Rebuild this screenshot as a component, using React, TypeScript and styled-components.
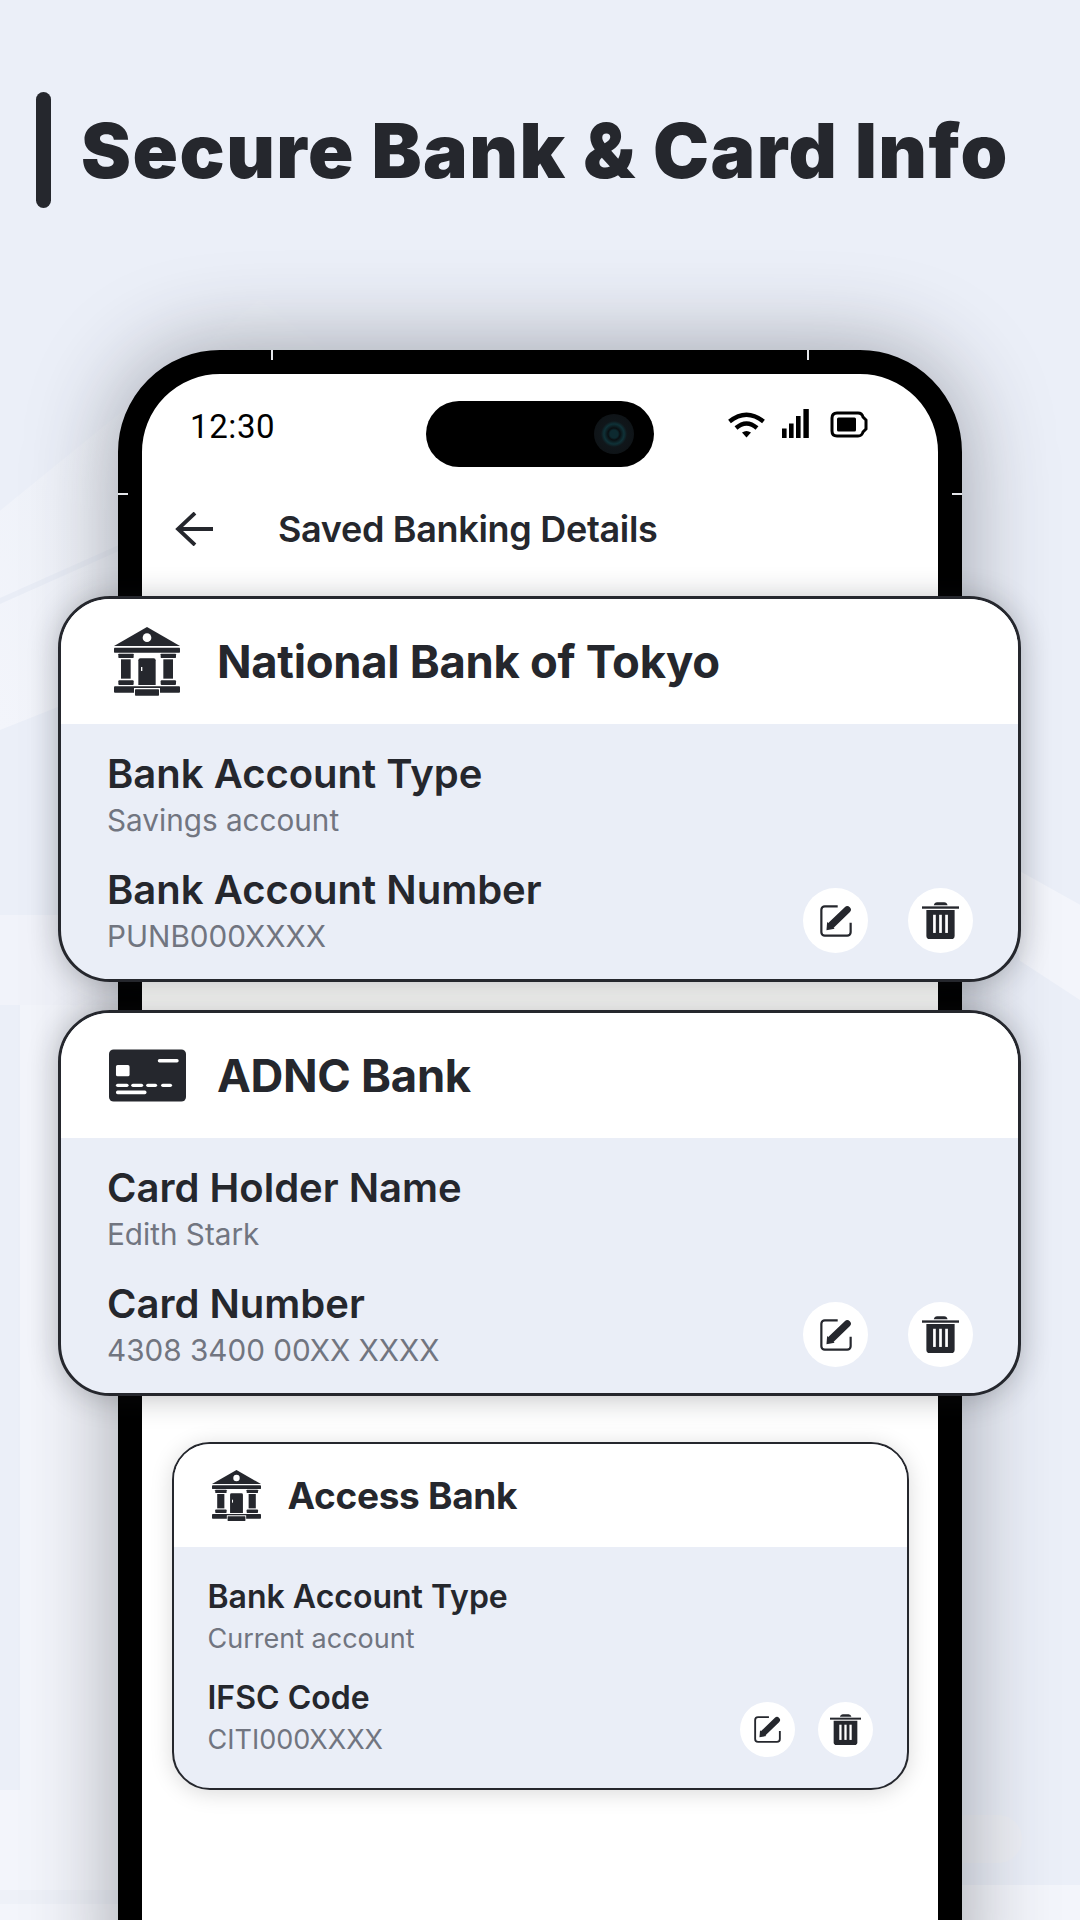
import React from 'react'
import styled, { createGlobalStyle, css } from 'styled-components'

const INK = '#25272d'
const MUTED = '#717580'
const PANEL = '#eaeef7'

const GlobalStyle = createGlobalStyle`
    html, body {
        margin: 0;
        padding: 0;
        background: #ebeff8;
    }
    * {
        box-sizing: border-box;
    }
`

const BankIcon = ({ size }: { size: number }) => (
    <svg width={size} viewBox="0 0 198 206" fill={INK}>
        <path d="M99 0 L198 57 H0 Z" />
        <circle cx="99" cy="32" r="13" fill="#fff" />
        <rect x="0" y="62" width="198" height="15" rx="2" />
        <rect x="13" y="80" width="46" height="13" rx="2" />
        <rect x="21" y="97" width="29" height="58" />
        <rect x="13" y="160" width="46" height="14" rx="3" />
        <rect x="140" y="80" width="46" height="13" rx="2" />
        <rect x="148" y="97" width="29" height="58" />
        <rect x="140" y="160" width="46" height="14" rx="3" />
        <path d="M73 100 a6 6 0 0 1 6 -6 H119 a6 6 0 0 1 6 6 V174 H73 Z" />
        <rect x="81" y="120" width="4" height="12" fill="#fff" />
        <rect x="0" y="178" width="198" height="19" rx="3" />
        <rect x="60" y="183" width="78" height="23" fill="#fff" />
        <rect x="63" y="187" width="72" height="19" rx="2" />
    </svg>
)

const CardIcon = () => (
    <svg width="77" height="53" viewBox="0 0 232 157">
        <rect width="232" height="157" rx="14" fill={INK} />
        <g fill="#fff">
            <rect x="21" y="47" width="41" height="34" rx="5" />
            <rect x="147" y="29" width="63" height="10" rx="5" />
            <rect x="21" y="103" width="38" height="10" rx="5" />
            <rect x="67" y="103" width="36" height="10" rx="5" />
            <rect x="112" y="103" width="33" height="10" rx="5" />
            <rect x="157" y="103" width="33" height="10" rx="5" />
            <rect x="21" y="124" width="92" height="11" rx="5" />
        </g>
    </svg>
)

const EditIcon = ({ size }: { size: number }) => (
    <svg width={size} height={size} viewBox="0 0 94 94">
        <path
            d="M52 4 H14 a10 10 0 0 0 -10 10 V80 a10 10 0 0 0 10 10 H80 a10 10 0 0 0 10 -10 V52"
            fill="none"
            stroke={INK}
            strokeWidth="6.5"
        />
        <path d="M33 59 L80 14" stroke={INK} strokeWidth="21" strokeLinecap="round" />
        <path d="M19 74 L21 50 L43 70 Z" fill={INK} />
    </svg>
)

const TrashIcon = ({ size }: { size: number }) => (
    <svg width={size} height={size} viewBox="0 0 110 110" fill={INK}>
        <path d="M35 10 Q37 1 45 1 H66 Q74 1 76 10 Z" />
        <rect x="0" y="13" width="110" height="7" />
        <path d="M13 24 H97 V100 a10 10 0 0 1 -10 10 H23 a10 10 0 0 1 -10 -10 Z" />
        <g fill="#fff">
            <rect x="33" y="38" width="8" height="54" />
            <rect x="51" y="38" width="8" height="54" />
            <rect x="69" y="38" width="8" height="54" />
        </g>
    </svg>
)

const Wifi = () => (
    <svg width="37" height="26" viewBox="0 0 37 26" fill="none" stroke="#000" strokeWidth="4.4">
        <path d="M1.5 9.5 Q18.5 -4 35.5 9.5" />
        <path d="M8 16 Q18.5 7 29 16" />
        <path d="M14 20.5 Q18.5 17.5 23 20.5 L18.5 25.5 Z" fill="#000" stroke="none" />
    </svg>
)

const Signal = () => (
    <svg width="27" height="29" viewBox="0 0 27 29" fill="#000">
        <rect x="0" y="19.5" width="4.6" height="9.5" />
        <rect x="7" y="14.5" width="4.6" height="14.5" />
        <rect x="14" y="7" width="4.6" height="22" />
        <rect x="21.4" y="0" width="5.4" height="29" />
    </svg>
)

const Battery = () => (
    <svg width="38" height="27" viewBox="0 0 38 27">
        <path
            d="M7 2 H28 Q32 2 33 6 L36 9 V18 L33 21 Q32 25 28 25 H7 Q2 25 2 20 V7 Q2 2 7 2 Z"
            fill="none"
            stroke="#000"
            strokeWidth="3"
        />
        <rect x="7" y="6.5" width="19" height="14" rx="1.5" fill="#000" />
    </svg>
)

const BackArrow = () => (
    <svg width="38" height="34" viewBox="0 0 38 34" fill="none" stroke={INK} strokeWidth="3.8">
        <path d="M38 17 H3" />
        <path d="M20 1 L3 17 L20 33" />
    </svg>
)

type FieldData = { label: string; value: string }

const BankCard = ({
    compact,
    icon,
    name,
    fields,
}: {
    compact?: boolean
    icon: React.ReactNode
    name: string
    fields: FieldData[]
}) => (
    <Card $compact={compact}>
        <CardHeader $compact={compact}>
            <IconSlot $compact={compact}>{icon}</IconSlot>
            <CardName $compact={compact}>{name}</CardName>
        </CardHeader>
        <CardBody $compact={compact}>
            <Fields $compact={compact}>
                {fields.map((f) => (
                    <div key={f.label}>
                        <FieldLabel $compact={compact}>{f.label}</FieldLabel>
                        <FieldValue $compact={compact}>{f.value}</FieldValue>
                    </div>
                ))}
            </Fields>
            <Actions $compact={compact}>
                <RoundButton $compact={compact}>
                    <EditIcon size={compact ? 27 : 32} />
                </RoundButton>
                <RoundButton $compact={compact}>
                    <TrashIcon size={compact ? 31 : 37} />
                </RoundButton>
            </Actions>
        </CardBody>
    </Card>
)

const App = () => (
    <Page>
        <GlobalStyle />
        <RoofLeft />
        <RoofLeftEdge />
        <RoofRight />
        <PlinthLeft />
        <ColumnLeft />
        <FootLeft />
        <FootLine />
        <FootRight />
        <PillRight />

        <TitleRow>
            <TitleBar />
            <Title>Secure Bank &amp; Card Info</Title>
        </TitleRow>

        <Phone>
            <NotchTop $side="left" />
            <NotchTop $side="right" />
            <NotchSide $side="left" />
            <NotchSide $side="right" />

            <StatusBar>
                <Clock>12:30</Clock>
                <Island>
                    <Camera />
                </Island>
                <StatusIcons>
                    <Wifi />
                    <Signal />
                    <BatterySlot>
                        <Battery />
                    </BatterySlot>
                </StatusIcons>
            </StatusBar>

            <NavBar>
                <BackArrow />
                <NavTitle>Saved Banking Details</NavTitle>
            </NavBar>

            <CardStack>
                <BankCard
                    icon={<BankIcon size={66} />}
                    name="National Bank of Tokyo"
                    fields={[
                        { label: 'Bank Account Type', value: 'Savings account' },
                        { label: 'Bank Account Number', value: 'PUNB000XXXX' },
                    ]}
                />
                <BankCard
                    icon={<CardIcon />}
                    name="ADNC Bank"
                    fields={[
                        { label: 'Card Holder Name', value: 'Edith Stark' },
                        { label: 'Card Number', value: '4308 3400 00XX XXXX' },
                    ]}
                />
            </CardStack>

            <LowerList>
                <BankCard
                    compact
                    icon={<BankIcon size={49} />}
                    name="Access Bank"
                    fields={[
                        { label: 'Bank Account Type', value: 'Current account' },
                        { label: 'IFSC Code', value: 'CITI000XXXX' },
                    ]}
                />
            </LowerList>
        </Phone>
    </Page>
)

export default App

const Page = styled.div`
    position: relative;
    width: 1080px;
    height: 1920px;
    overflow: hidden;
    background: #ebeff8;
    font-family: Inter, 'Liberation Sans', sans-serif;
    color: ${INK};
`

const Decor = styled.div`
    position: absolute;
    background: #f3f5fb;
`

const RoofLeft = styled(Decor)`
    left: 0;
    top: 300px;
    width: 540px;
    height: 430px;
    clip-path: polygon(48% 0, 100% 50%, 0 100%, 0 49%);
    background: linear-gradient(60deg, #f3f5fb 0%, #eff2f9 25%, #ecf0f8 50%);
`

const RoofLeftEdge = styled(Decor)`
    left: 0;
    top: 520px;
    width: 130px;
    height: 100px;
    clip-path: polygon(0 78%, 100% 20%, 100% 26%, 0 84%);
    background: #e9edf6;
`

const RoofRight = styled(Decor)`
    left: 1000px;
    top: 860px;
    width: 80px;
    height: 140px;
    clip-path: polygon(0 0, 100% 32%, 100% 100%, 25% 72%);
`

const PlinthLeft = styled(Decor)`
    left: 0;
    top: 915px;
    width: 130px;
    height: 90px;
    background: #f1f3fa;
`

const ColumnLeft = styled(Decor)`
    left: 20px;
    top: 1005px;
    width: 100px;
    height: 790px;
`

const FootLeft = styled(Decor)`
    left: 0;
    top: 1790px;
    width: 130px;
    height: 130px;
`

const FootLine = styled(Decor)`
    left: 0;
    top: 1890px;
    width: 130px;
    height: 14px;
    background: #eef1f8;
`

const FootRight = styled(Decor)`
    left: 960px;
    top: 1885px;
    width: 120px;
    height: 35px;
`

const PillRight = styled(Decor)`
    left: 940px;
    top: 1815px;
    width: 82px;
    height: 48px;
    border-radius: 24px;
    background: #eef0f6;
`

const TitleRow = styled.div`
    position: relative;
    display: flex;
    align-items: center;
    gap: 30px;
    padding: 92px 0 0 36px;
`

const TitleBar = styled.div`
    width: 15px;
    height: 116px;
    border-radius: 8px;
    background: ${INK};
`

const Title = styled.h1`
    margin: 0 0 -2px;
    font-family: Inter, 'Liberation Sans', sans-serif;
    font-size: 75px;
    font-weight: 900;
    letter-spacing: 1.5px;
    line-height: 80px;
    white-space: nowrap;
    color: ${INK};
`

const Phone = styled.div`
    position: relative;
    width: 844px;
    height: 1660px;
    margin: 142px 0 0 118px;
    border: 24px solid #000;
    border-radius: 102px 102px 0 0;
    background: #fff;
    box-shadow: 0 0 90px rgba(40, 42, 50, 0.4);
`

const NotchTop = styled.i<{ $side: 'left' | 'right' }>`
    position: absolute;
    top: -24px;
    ${({ $side }) => ($side === 'left' ? 'left: 129px;' : 'right: 129px;')}
    width: 2px;
    height: 10px;
    background: #e4e6ea;
`

const NotchSide = styled.i<{ $side: 'left' | 'right' }>`
    position: absolute;
    top: 119px;
    ${({ $side }) => ($side === 'left' ? 'left: -24px;' : 'right: -24px;')}
    width: 10px;
    height: 2px;
    background: #e4e6ea;
`

const StatusBar = styled.div`
    display: grid;
    grid-template-columns: 236px 228px 1fr;
    padding: 27px 70px 0 48px;
    height: 93px;
`

const Clock = styled.div`
    font-family: Roboto, 'Liberation Sans', sans-serif;
    font-size: 33px;
    line-height: 52px;
    letter-spacing: 0.6px;
    color: #000;
`

const Island = styled.div`
    position: relative;
    height: 66px;
    border-radius: 33px;
    background: #000;
`

const Camera = styled.div`
    position: absolute;
    right: 20px;
    top: 13px;
    width: 40px;
    height: 40px;
    border-radius: 50%;
    background: radial-gradient(circle, #0d2a30 0 4px, #0a0f12 6px, #0f3238 10px, #10161a 13px, #0d1114 100%);
`

const StatusIcons = styled.div`
    display: flex;
    justify-content: flex-end;
    align-items: flex-end;
    gap: 17px;
    height: 37px;
`

const BatterySlot = styled.div`
    display: flex;
    margin-left: 4px;
`

const NavBar = styled.div`
    display: flex;
    align-items: center;
    gap: 65px;
    height: 60px;
    margin-top: 32px;
    padding-left: 33px;
`

const NavTitle = styled.div`
    font-size: 36px;
    font-weight: 600;
    letter-spacing: -0.32px;
    color: ${INK};
`

const CardStack = styled.div`
    display: flex;
    flex-direction: column;
    gap: 28px;
    margin: 37px 0 0;
    background: #fafaf8;
`

const LowerList = styled.div`
    display: flex;
    justify-content: center;
    margin-top: 46px;
`

const Card = styled.div<{ $compact?: boolean }>`
    position: relative;
    overflow: hidden;
    flex: none;
    background: ${PANEL};
    ${({ $compact }) =>
        $compact
            ? css`
                  width: 737px;
                  height: 348px;
                  border: 2px solid ${INK};
                  border-radius: 38px;
                  box-shadow: 0 3px 22px rgba(0, 0, 0, 0.15);
              `
            : css`
                  width: 963px;
                  height: 386px;
                  margin: 0 -84px;
                  border: 3px solid ${INK};
                  border-radius: 52px;
                  box-shadow: 0 2px 30px rgba(30, 32, 40, 0.28);
              `}
`

const CardHeader = styled.div<{ $compact?: boolean }>`
    display: flex;
    align-items: center;
    background: #fff;
    height: ${({ $compact }) => ($compact ? '103px' : '125px')};
    padding-left: ${({ $compact }) => ($compact ? '37px' : '46px')};
`

const IconSlot = styled.div<{ $compact?: boolean }>`
    display: flex;
    align-items: center;
    justify-content: center;
    width: ${({ $compact }) => ($compact ? '51px' : '80px')};
    margin-right: ${({ $compact }) => ($compact ? '26px' : '30px')};
`

const CardName = styled.div<{ $compact?: boolean }>`
    font-weight: 700;
    font-size: ${({ $compact }) => ($compact ? '37px' : '45.4px')};
    letter-spacing: -0.3px;
    color: ${INK};
`

const CardBody = styled.div<{ $compact?: boolean }>`
    display: flex;
    justify-content: space-between;
    align-items: flex-end;
    height: ${({ $compact }) => ($compact ? '241px' : '255px')};
    padding: ${({ $compact }) => ($compact ? '32px 34px 31px 34px' : '27px 45px 26px 46px')};
`

const Fields = styled.div<{ $compact?: boolean }>`
    display: flex;
    flex-direction: column;
    align-self: flex-start;
    gap: ${({ $compact }) => ($compact ? '26px' : '29px')};
`

const FieldLabel = styled.div<{ $compact?: boolean }>`
    font-weight: 600;
    font-size: ${({ $compact }) => ($compact ? '32px' : '40px')};
    line-height: ${({ $compact }) => ($compact ? '36px' : '46px')};
    color: ${INK};
`

const FieldValue = styled.div<{ $compact?: boolean }>`
    font-weight: 400;
    font-size: ${({ $compact }) => ($compact ? '27px' : '29.7px')};
    line-height: ${({ $compact }) => ($compact ? '31px' : '36px')};
    margin-top: ${({ $compact }) => ($compact ? '8px' : '5px')};
    color: ${MUTED};
`

const Actions = styled.div<{ $compact?: boolean }>`
    display: flex;
    gap: ${({ $compact }) => ($compact ? '23px' : '40px')};
`

const RoundButton = styled.div<{ $compact?: boolean }>`
    display: flex;
    align-items: center;
    justify-content: center;
    width: ${({ $compact }) => ($compact ? '55px' : '65px')};
    height: ${({ $compact }) => ($compact ? '55px' : '65px')};
    border-radius: 50%;
    background: #fff;
`
